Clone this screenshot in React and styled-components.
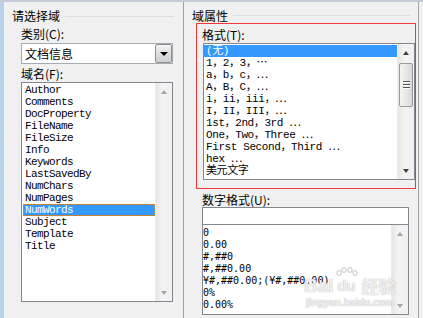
import React from "react"
import styled, { createGlobalStyle } from "styled-components"

const GlobalStyle = createGlobalStyle`
html, body { margin:0; padding:0; background:#f0f0f0; }
`;

const Window = styled.div`
position:relative;
width:423px;
height:318px;
display:flex;
background:#f0f0f0;
border-top:2px solid #c4cdd7;
box-sizing:border-box;
overflow:hidden;
font-family:"Noto Sans CJK SC", "Noto Sans", sans-serif;
font-size:12px;
color:#000;
`;

const FrameStrip = styled.div`
width:4px;
flex-shrink:0;
background:#b9d1ea;
`;

const Pane = styled.div`
width:${p => p.$w}px;
flex-shrink:0;
display:flex;
flex-direction:column;
padding:6px ${p => p.$pr}px 0 8px;
box-sizing:border-box;
`;

const VLine = styled.div`
width:1px;
flex-shrink:0;
background:#a0a0a0;
`;

const EdgeGap = styled.div`
width:4px;
flex-shrink:0;
`;

const GroupHeading = styled.div`
display:flex;
align-items:center;
gap:5px;
height:${p => p.$h}px;
line-height:${p => p.$h}px;
white-space:nowrap;
&::after{
  content:"";
  flex:1;
  height:1px;
  background:#d5dfe5;
}
`;

const Field = styled.div`
display:flex;
flex-direction:column;
margin-left:${p => p.$ml || 0}px;
width:${p => p.$w}px;
`;

const Label = styled.div`
height:14px;
line-height:14px;
margin-top:${p => p.$mt || 0}px;
margin-left:${p => p.$ml || 0}px;
white-space:nowrap;
`;

const Combo = styled.div`
margin-top:2px;
height:21px;
display:flex;
border:1px solid #a5a9b0;
background:#fff;
box-sizing:border-box;
`;

const ComboText = styled.div`
flex:1;
padding-left:3px;
line-height:19px;
`;

const ComboButton = styled.div`
width:15px;
border:1px solid #8c8f94;
border-radius:2px;
background:linear-gradient(#f5f5f5, #dedede 50%, #cfcfcf);
display:flex;
align-items:center;
justify-content:center;
&::before{
  content:"";
  border-left:4px solid transparent;
  border-right:4px solid transparent;
  border-top:4px solid #000;
}
`;

const ListBox = styled.div`
margin-top:${p => p.$mt || 0}px;
margin-left:${p => p.$ml || 0}px;
height:${p => p.$h}px;
display:flex;
border:1px solid #828790;
background:#fff;
box-sizing:border-box;
`;

const ListBody = styled.div`
flex:1;
padding:${p => p.$pad};
overflow:hidden;
`;

const Row = styled.div`
height:12px;
line-height:12px;
padding-left:${p => p.$pl}px;
white-space:nowrap;
font-family:${p => p.$font};
font-size:${p => p.$fs}px;
letter-spacing:${p => p.$ls}px;
background:${p => (p.$sel ? "#3399ff" : "transparent")};
color:${p => (p.$sel ? "#fff" : "#000")};
outline:${p => (p.$focus ? "1px dotted #c98a3c" : "none")};
outline-offset:-1px;
`;

const ScrollBar = styled.div`
width:17px;
flex-shrink:0;
display:flex;
flex-direction:column;
background:linear-gradient(to right, #e6e6e6, #f3f3f3 40%, #f0f0f0);
border-left:1px solid #ececec;
box-sizing:border-box;
`;

const ArrowBtn = styled.div`
height:17px;
display:flex;
align-items:center;
justify-content:center;
&::before{
  content:"";
  border-left:3.5px solid transparent;
  border-right:3.5px solid transparent;
  ${p => (p.$down ? "border-top" : "border-bottom")}:4px solid ${p => (p.$active ? "#404040" : "#a5a5a5")};
}
`;

const Track = styled.div`
flex:1;
position:relative;
`;

const Thumb = styled.div`
position:absolute;
left:1px;
right:1px;
top:${p => p.$top}px;
height:${p => p.$h}px;
border:1px solid #9a9a9a;
border-radius:2px;
background:linear-gradient(to right, #f4f4f4, #e8e8e8 50%, #d8d8d8);
box-sizing:border-box;
display:flex;
flex-direction:column;
align-items:center;
justify-content:center;
gap:1px;
`;

const Grip = styled.span`
width:7px;
height:1px;
background:#555;
border-bottom:1px solid #fff;
`;

const RedFrame = styled.div`
margin-left:4px;
width:220px;
height:166px;
border:1px solid #f23636;
box-sizing:border-box;
padding:4px 0 0 5px;
display:flex;
flex-direction:column;
`;

const TextInput = styled.div`
height:18px;
border:1px solid #828790;
background:#fff;
box-sizing:border-box;
`;

// faint watermark lying over the number list
const Watermark = styled.div`
position:absolute;
left:304px;
top:265px;
display:flex;
flex-direction:column;
align-items:flex-start;
color:rgba(255,255,255,0.8);
text-shadow:0 0 1px rgba(160,160,160,0.6), 0 0 1px rgba(160,160,160,0.6);
pointer-events:none;
`;

const MarkLogo = styled.div`
display:flex;
align-items:flex-end;
font-family:"Liberation Sans", sans-serif;
font-weight:bold;
font-size:19px;
line-height:20px;
`;

const Paw = styled.span`
display:inline-flex;
flex-direction:column;
align-items:center;
font-size:15px;
margin:0 2px;
`;

const MarkCn = styled.span`
font-family:"Noto Sans CJK SC", sans-serif;
font-size:17px;
margin-left:2px;
`;

const MarkUrl = styled.div`
font-family:"Liberation Sans", sans-serif;
font-size:10px;
font-weight:bold;
line-height:11px;
margin-top:1px;
margin-left:2px;
`;

const fieldNames = ["Author","Comments","DocProperty","FileName","FileSize","Info","Keywords","LastSavedBy","NumChars","NumPages","NumWords","Subject","Template","Title"];

const formats = ["(无)","1，2，3，⋯","a，b，c，⋯","A，B，C，⋯","i，ii，iii，⋯","I，II，III，⋯","1st，2nd，3rd ⋯","One，Two，Three ⋯","First Second，Third ⋯","hex ⋯","美元文字"];

const numberFormats = ["0","0.00","#,##0","#,##0.00","¥#,##0.00;(¥#,##0.00)","0%","0.00%"];

const monoFont = `"Liberation Mono", "Noto Sans CJK SC", monospace`;
const numFont = `"DejaVu Sans Mono", monospace`;

const App = () => {
  return (
    <>
      <GlobalStyle />
      <Window>
        <FrameStrip />
        <Pane $w={179} $pr={9}>
          <GroupHeading $h={16}>请选择域</GroupHeading>
          <Field $ml={9} $w={152}>
            <Label $mt={3}>类别(C):</Label>
            <Combo>
              <ComboText>文档信息</ComboText>
              <ComboButton />
            </Combo>
            <Label $mt={3}>域名(F):</Label>
            <ListBox $mt={1} $h={220}>
              <ListBody $pad="1px 0 0 1px">
                {fieldNames.map(name => (
                  <Row key={name} $pl={2} $font={monoFont} $fs={11} $ls={-0.6}
                    $sel={name === "NumWords"} $focus={name === "NumWords"}>{name}</Row>
                ))}
              </ListBody>
              <ScrollBar>
                <ArrowBtn />
                <Track />
                <ArrowBtn $down />
              </ScrollBar>
            </ListBox>
          </Field>
        </Pane>
        <VLine />
        <Pane $w={234} $pr={8}>
          <GroupHeading $h={15}>域属性</GroupHeading>
          <RedFrame>
            <Label>格式(T):</Label>
            <ListBox $mt={1} $ml={1} $h={137}>
              <ListBody $pad="1px 0 0 0">
                {formats.map((f, i) => (
                  <Row key={f} $pl={2} $font={monoFont} $fs={11} $ls={-0.4} $sel={i === 0}>{f}</Row>
                ))}
              </ListBody>
              <ScrollBar>
                <ArrowBtn $active />
                <Track>
                  <Thumb $top={2} $h={44}>
                    <Grip /><Grip /><Grip />
                  </Thumb>
                </Track>
                <ArrowBtn $down $active />
              </ScrollBar>
            </ListBox>
          </RedFrame>
          <Field $ml={10} $w={207}>
            <Label $mt={4}>数字格式(U):</Label>
            <TextInput />
            <ListBox $mt={-1} $h={91}>
              <ListBody $pad="2px 0 0 0">
                {numberFormats.map(f => (
                  <Row key={f} $pl={0} $font={numFont} $fs={10} $ls={0}>{f}</Row>
                ))}
              </ListBody>
              <ScrollBar>
                <ArrowBtn />
                <Track />
                <ArrowBtn $down />
              </ScrollBar>
            </ListBox>
          </Field>
        </Pane>
        <VLine />
        <EdgeGap />
        <Watermark>
          <MarkLogo>
            Bai
            <Paw>
              <svg width="22" height="9" viewBox="0 0 22 9">
                <g fill="none" stroke="rgba(160,160,160,0.6)" strokeWidth="1">
                  <ellipse cx="3" cy="6" rx="2.2" ry="2.5" />
                  <ellipse cx="8" cy="3" rx="2.2" ry="2.5" />
                  <ellipse cx="14" cy="3" rx="2.2" ry="2.5" />
                  <ellipse cx="19" cy="6" rx="2.2" ry="2.5" />
                </g>
              </svg>
              du
            </Paw>
            <MarkCn>经验</MarkCn>
          </MarkLogo>
          <MarkUrl>jingyan.baidu.com</MarkUrl>
        </Watermark>
      </Window>
    </>
  )
}

export default App;
